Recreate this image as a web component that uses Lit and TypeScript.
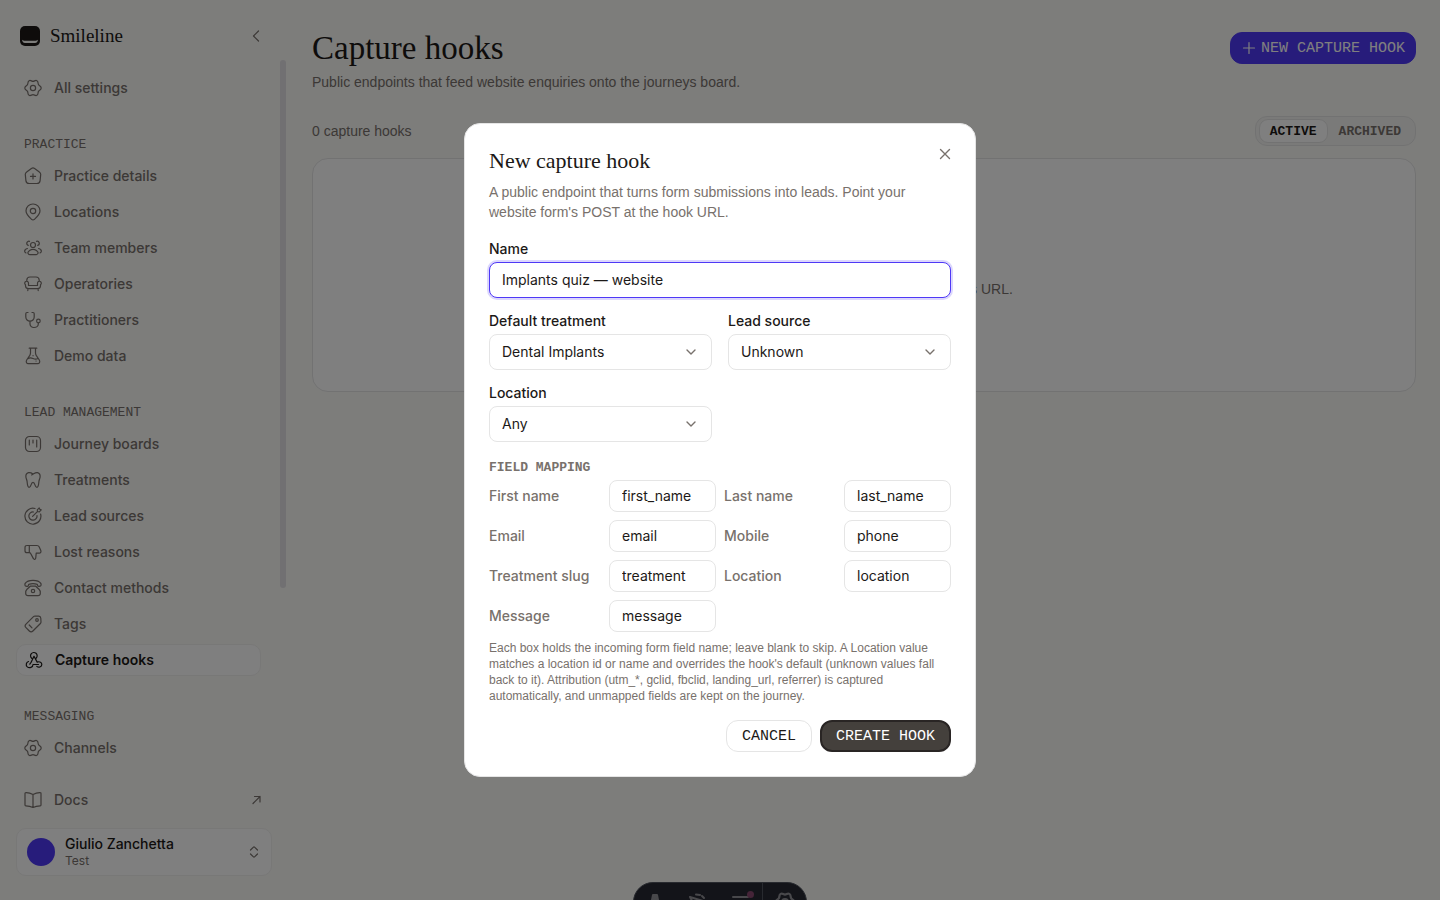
import { LitElement, html, svg, css } from "lit";
import { customElement, state } from "lit/decorators.js";

const paths: Record<string, unknown> = {
  gear: svg`<path d="M9 2.400C10.500 2.400 11.300.8 12.900 1.700 14.600 2.700 13.700 4.400 14.500 5.600 15.200 6.800 17.200 7 17.200 9 17.200 11 15.200 11.200 14.500 12.400 13.700 13.600 14.600 15.300 12.900 16.300 11.300 17.200 10.500 15.600 9 15.600 7.500 15.600 6.700 17.200 5.100 16.300 3.400 15.300 4.300 13.600 3.500 12.400 2.800 11.200.8 11 .8 9 .8 7 2.800 6.800 3.500 5.600 4.300 4.400 3.400 2.700 5.100 1.700 6.700.8 7.500 2.400 9 2.400Z"/><circle cx="9" cy="9" r="2.600"/>`,
  home: svg`<path d="M7.400 1.500a2.800 2.800 0 0 1 3.200 0l4.400 3.200c1 .7 1.800 1.600 1.700 2.800l-.6 6.100c-.2 2.100-1.400 2.900-3.200 2.900H5.100c-1.800 0-3-.8-3.200-2.900l-.6-6.100C1.200 6.300 2 5.400 3 4.700Z"/><path d="M9 6.900v5M6.500 9.400h5"/>`,
  pin: svg`<path d="M9 17c-.6 0-1-.3-1.500-.7C4.800 13.700 2 11.200 2 7.700A6.900 6.900 0 0 1 9 1a6.900 6.900 0 0 1 7 6.700c0 3.500-2.800 6-5.500 8.600-.5.4-.9.7-1.500.7Z"/><circle cx="9" cy="8" r="2.700"/>`,
  team: svg`<circle cx="9" cy="6" r="2.500"/><path d="M5.600 11.500c2-1.300 4.800-1.300 6.800 0 1 .7 2.200 1.800 1.500 3-.4.700-1 1.200-1.900 1.200H6c-.9 0-1.500-.5-1.900-1.200-.7-1.200.5-2.300 1.500-3ZM12.500 2.300a2.100 2.100 0 1 1 1.200 4.100M5.500 2.300a2.100 2.100 0 1 0-1.200 4.100M14.600 9.500c1.500.4 2.900 1.500 2.700 3-.1.700-.6 1.200-1.200 1.300M3.400 9.500C1.900 9.900.5 11 .7 12.500c.1.700.6 1.200 1.200 1.300"/>`,
  sofa: svg`<path d="M2.800 6.200V5a3.200 3.200 0 0 1 3.200-3h6a3.200 3.200 0 0 1 3.200 3v1.200M4.500 10.500V8.200A1.900 1.900 0 1 0 1.500 9.700V11a3 3 0 0 0 3 2.700h9a3 3 0 0 0 3-2.700V9.700a1.900 1.900 0 1 0-3-1.500v2.300ZM3.800 13.700v1.900M14.200 13.700v1.900"/>`,
  steth: svg`<path d="M4 1.500H3c-.8 0-1.200.5-1.200 1.300V6a4.200 4.200 0 0 0 8.400 0V2.800c0-.8-.4-1.300-1.200-1.300H8M6 10.200V13a3.700 3.700 0 0 0 4 3.500c2.300 0 4.300-1.300 4.300-3.500v-1.200"/><circle cx="14.400" cy="10" r="1.800"/>`,
  flask: svg`<path d="M5.200 1.200h7.600M6.500 1.200v4.600c0 1-.2 1.800-.7 2.600L2.700 13c-1 1.600-.2 3.600 1.700 3.600h9.200c1.900 0 2.700-2 1.700-3.600l-3.100-4.600c-.5-.8-.7-1.600-.7-2.600V1.200M4.200 11.500c1.600-1 3.200-.7 4.800 0 1.600.7 3.200.9 4.800 0M9 8.700h.1M12 14h.1"/>`,
  board: svg`<rect x="1.500" y="1.500" width="15" height="15" rx="4"/><path d="M5.300 5v5M9 5v3M12.700 5v7"/>`,
  tooth: svg`<path d="M9 3C7.500 2 6 1.400 4.500 1.700 2.500 2.200 1.700 4 1.900 6c.2 1.800 1 2.700 1.200 4.500.2 2 .3 5.800 2 5.800 2.400 0 1.500-5 3.900-5s1.500 5 3.900 5c1.700 0 1.800-3.800 2-5.800.2-1.800 1-2.700 1.200-4.500.2-2-.6-3.800-2.600-4.300C11.300 1.200 10 2.900 7.600 4"/>`,
  target: svg`<path d="M11 1.500A8 8 0 1 0 16.600 7M9.500 5A4.100 4.100 0 1 0 13 8.500M8.600 9.400l5-5M13.500 4.500l-.2-1.700L15.200.9l.6 1.400 1.400.6-1.900 1.900Z"/>`,
  down: svg`<path d="M5.300 2.500H3C1.700 2.500 1 3.200 1 4.500v3.200c0 1.300.7 2 2 2h2.300ZM5.300 2.500H13c1 0 1.700.4 2.100 1.300l1.700 3.700c.5 1.400-.2 2.700-1.600 2.700h-3l-.5 5c-.1 1.200-1.700 1.600-2.300.4L6.800 10.700c-.4-.7-.8-1-1.500-1"/>`,
  phone: svg`<path d="M4.800 5.300 4.400 6.500c-.3.700-.8.900-1.500.8l-1-.2C.9 6.900.6 5.500 1.200 4.400 2.700 2 5.500 1.300 9 1.300S15.300 2 16.800 4.400c.6 1.100.3 2.500-.7 2.700l-1 .2c-.7.100-1.200-.1-1.500-.8l-.4-1.200c-2.800-.8-5.600-.8-8.400 0ZM6.300 7.200h5.400l3.300 3.100c1.100 1 1.500 2.500 1.300 4.200-.1 1.500-.8 2.200-2.300 2.200H4c-1.500 0-2.200-.7-2.300-2.200-.2-1.700.2-3.200 1.300-4.200Z"/><circle cx="9" cy="12" r="1.700"/>`,
  tag: svg`<path d="M9.500 1.600 2 9.100c-1.300 1.300-1.300 2.300 0 3.600L5.300 16c1.300 1.300 2.300 1.300 3.600 0l7.500-7.500c.4-.4.600-.9.600-1.500l-.2-3.800c-.1-1.300-.7-1.900-2-2L11 1c-.6 0-1.100.2-1.500.6Z"/><circle cx="13" cy="5" r="1.300"/><path d="m5.200 10 2.800 2.800"/>`,
  hook: svg`<path d="M9 5.300 6 11.500M11.300 7A3.300 3.300 0 1 0 6.700 7.300M9 5.300l3.200 5.800c2.500-1 4.800.3 4.600 2.600-.2 2.300-3.200 3.300-5 1.700M13.500 13.500H8c0 3-3.700 4-5.700 2.400-1.800-1.600-1.200-4.800 1.200-5.400M4.800 13.200 6 11.500"/>`,
  book: svg`<path d="M9 3.500v13M9 3.500C6.600 2.200 4 1.600 1.800 1.700c-.5 0-.8.3-.8.800V14c0 .5.300.8.800.8 2.400 0 5 .5 7.200 1.700 2.200-1.200 4.800-1.700 7.200-1.700.5 0 .8-.3.800-.8V2.500c0-.5-.3-.8-.8-.8C14 1.600 11.400 2.200 9 3.500Z"/>`,
};

const icon = (name: string) => html`<svg class="icon" viewBox="0 0 18 18" aria-hidden="true">${paths[name]}</svg>`;

const sections = [
  { title: "", items: [["gear", "All settings"]] },
  {
    title: "Practice",
    items: [["home", "Practice details"], ["pin", "Locations"], ["team", "Team members"], ["sofa", "Operatories"], ["steth", "Practitioners"], ["flask", "Demo data"]],
  },
  {
    title: "Lead management",
    items: [["board", "Journey boards"], ["tooth", "Treatments"], ["target", "Lead sources"], ["down", "Lost reasons"], ["phone", "Contact methods"], ["tag", "Tags"], ["hook", "Capture hooks"]],
  },
  { title: "Messaging", items: [["gear", "Channels"]] },
];

const mapping = [
  ["First name", "first_name"],
  ["Last name", "last_name"],
  ["Email", "email"],
  ["Mobile", "phone"],
  ["Treatment slug", "treatment"],
  ["Location", "location"],
  ["Message", "message"],
];

@customElement("app-root")
export class AppRoot extends LitElement {
  @state() private current = "Capture hooks";

  static styles = css`
    :host {
      --sans: Inter, "Liberation Sans", sans-serif;
      --prose: "Liberation Sans", Arial, sans-serif;
      --serif: "Liberation Serif", serif;
      --mono: "Liberation Mono", monospace;
      --ink: #1c1917;
      --muted: #78716c;
      --line: #e5e5e5;
      --accent: #4f39f6;
      display: block;
      height: 100vh;
      overflow: hidden;
      background: #fafaf7;
      color: var(--ink);
      font: 400 14px/20px var(--sans);
    }
    * { box-sizing: border-box; }
    h1, h2, p { margin: 0; }
    p, .count { font-family: var(--prose); }
    h1, h2 { font-family: var(--serif); font-weight: 400; }
    button, input, select { font: inherit; color: inherit; margin: 0; }
    button { cursor: pointer; }
    svg { fill: none; stroke: currentColor; stroke-width: 1.2; stroke-linecap: round; stroke-linejoin: round; flex: none; }
    .icon { width: 18px; height: 18px; }
    .layout { display: grid; grid-template-columns: 288px 1fr; height: 100%; }

    .sidebar { display: flex; flex-direction: column; min-height: 0; padding: 12px 16px 24px; }
    .brand-row { display: flex; align-items: center; justify-content: space-between; height: 48px; padding: 0 8px 0 4px; flex: none; }
    .brand { display: flex; align-items: center; gap: 10px; font: 400 19px/24px var(--serif); }
    .logo { width: 20px; height: 20px; stroke: none; }
    .collapse { display: flex; padding: 0; border: 0; background: none; color: var(--muted); }
    .small { width: 16px; height: 16px; }
    .scroller { position: relative; flex: 1; min-height: 0; margin-right: -16px; padding: 12px 27px 0 0; overflow: hidden; display: flex; flex-direction: column; gap: 32px; }
    .thumb { position: absolute; top: 0; right: 2px; width: 6px; height: 75%; border-radius: 3px; background: #e2e1e4; }
    .section { display: flex; flex-direction: column; gap: 6px; }
    .caption { font: 400 13px/18px var(--mono); text-transform: uppercase; color: var(--muted); }
    .section .caption { padding-left: 8px; }
    .items { display: flex; flex-direction: column; gap: 4px; }
    .nav-link { display: flex; align-items: center; gap: 12px; height: 32px; padding: 0 8px; border-radius: 10px; color: var(--muted); font-weight: 500; text-decoration: none; }
    .nav-link.active { border: 1px solid #f1f0ee; background: #fff; color: var(--ink); font-weight: 600; }
    .bottom { display: flex; flex-direction: column; gap: 12px; padding-top: 20px; flex: none; }
    .docs span { flex: 1; }
    .user { display: flex; align-items: center; gap: 10px; height: 48px; padding: 0 9px 0 10px; border: 1px solid #f1f0ee; border-radius: 10px; background: #fff; text-align: left; }
    .user .small { color: var(--muted); }
    .avatar { width: 28px; height: 28px; border-radius: 50%; background: var(--accent); }
    .who { flex: 1; display: flex; flex-direction: column; font-weight: 500; line-height: 18px; }
    .who small { font-size: 12px; line-height: 16px; font-weight: 400; color: var(--muted); }

    .main { min-width: 0; padding: 32px 24px; }
    .head, .toolbar { display: flex; justify-content: space-between; align-items: flex-start; }
    .titles { display: flex; flex-direction: column; gap: 8px; color: var(--muted); }
    h1 { font-size: 33px; line-height: 32px; color: var(--ink); }
    .toolbar { margin: 24px 0 12px; align-items: center; color: var(--muted); }
    .btn { display: inline-flex; align-items: center; justify-content: center; height: 32px; padding: 2px 15px 0; border: 1px solid var(--line); border-radius: 12px; background: #fff; font: 400 15px/20px var(--mono); text-transform: uppercase; }
    .btn.primary { gap: 4px; border-color: var(--accent); background: var(--accent); color: #fff; padding: 2px 10px 0; }
    .btn.primary svg { margin-bottom: 2px; }
    .btn.dark { border: 2px solid #292524; background: #44403c; color: #fff; padding: 2px 14px 0; }
    .segmented { display: flex; padding: 2px 3px; border: 1px solid var(--line); border-radius: 12px; background: #f5f5f3; }
    .segment { height: 24px; padding: 2px 10px 0; border: 1px solid transparent; border-radius: 9px; background: none; color: var(--muted); font: 700 13px/16px var(--mono); text-transform: uppercase; }
    .segment.on { border-color: var(--line); background: #fff; color: var(--ink); }
    .empty { display: flex; flex-direction: column; align-items: center; justify-content: center; gap: 4px; min-height: 234px; padding: 32px; border: 1px solid var(--line); border-radius: 16px; background: #fff; color: var(--muted); text-align: center; }
    .empty h2 { font-size: 20px; line-height: 24px; color: var(--ink); }

    .devbar { position: fixed; left: 50%; bottom: -22px; transform: translateX(-50%); display: flex; width: 174px; height: 40px; border: 1px solid #50545e; border-radius: 20px; background: #262832; color: #909096; overflow: hidden; }
    .tool { position: relative; flex: 1; display: flex; justify-content: center; padding: 9px 0 0; border: 0; background: none; }
    .tool + .tool:last-child { border-left: 1px solid #50545e; }
    .tool svg { width: 20px; height: 20px; stroke-width: 2; }
    .dot { position: absolute; top: 8px; right: 8px; width: 7px; height: 7px; border-radius: 50%; background: #8a4870; }

    .overlay { position: fixed; inset: 0; display: grid; place-items: center; background: rgba(0, 0, 0, 0.5); }
    .dialog { position: relative; width: min(512px, calc(100vw - 32px)); padding: 24px; border: 1px solid var(--line); border-radius: 16px; background: #fff; }
    .dialog h2 { font-size: 22px; line-height: 26px; margin-bottom: 8px; }
    .lead { color: var(--muted); margin-bottom: 20px; }
    .close { position: absolute; top: 22px; right: 22px; display: flex; padding: 0; border: 0; background: none; color: var(--muted); }
    .form { display: flex; flex-direction: column; gap: 16px; }
    .pair { display: grid; grid-template-columns: 1fr 1fr; gap: 16px; }
    .field { display: flex; flex-direction: column; gap: 6px; }
    .field label { font-weight: 500; line-height: 14px; }
    .control { width: 100%; height: 36px; padding: 0 12px; border: 1px solid var(--line); border-radius: 8px; background: #fff; outline: none; appearance: none; }
    input.control { padding-bottom: 2px; }
    .control.focused { border-color: var(--accent); box-shadow: 0 0 0 2px #dcd7fd; }
    .control.compact { height: 32px; }
    .picker { position: relative; }
    .picker svg { position: absolute; right: 13px; top: 10px; color: var(--muted); pointer-events: none; }
    .bold { stroke-width: 1.4; }
    .mapping .caption { font-weight: 700; line-height: 20px; margin-bottom: 2px; }
    .map-grid { display: grid; grid-template-columns: 1fr 1fr; gap: 8px; margin-bottom: 8px; }
    .map-row { display: grid; grid-template-columns: 112px 1fr; align-items: center; gap: 8px; }
    .map-row label { color: var(--muted); font-weight: 500; }
    .hint { font-size: 12px; line-height: 16px; color: var(--muted); }
    .actions { display: flex; justify-content: flex-end; gap: 8px; }
  `;

  private link(name: string, text: string) {
    const active = text === this.current;
    return html`<a class="nav-link ${active ? "active" : ""}" href="#${name}" @click=${() => (this.current = text)}>${icon(name)}<span>${text}</span></a>`;
  }

  private picker(id: string, label: string, value: string) {
    return html`<div class="field">
      <label for=${id}>${label}</label>
      <div class="picker">
        <select class="control" id=${id}><option>${value}</option></select>
        <svg class="small bold" viewBox="0 0 16 16" aria-hidden="true"><path d="m4 6 4 4 4-4"/></svg>
      </div>
    </div>`;
  }

  render() {
    return html`
      <div class="layout">
        <aside class="sidebar">
          <div class="brand-row">
            <div class="brand">
              <svg class="logo" viewBox="0 0 20 20" aria-hidden="true"><rect width="20" height="20" rx="5" fill="#1c1917"/><path d="M2 13.800c.3 2 1 3.200 3 3.200h10c2 0 2.700-1.200 3-3.200-1 .9-1.800 1-3 1H5c-1.200 0-2-.1-3-1Z" fill="#fafaf7"/></svg>
              Smileline
            </div>
            <button class="collapse" aria-label="Collapse sidebar"><svg class="small" viewBox="0 0 16 16"><path d="m10.500 3-5 5 5 5"/></svg></button>
          </div>
          <nav class="scroller">
            ${sections.map(
              (s) => html`<div class="section">
                ${s.title ? html`<div class="caption">${s.title}</div>` : ""}
                <div class="items">${s.items.map(([n, t]) => this.link(n, t))}</div>
              </div>`
            )}
            <div class="thumb"></div>
          </nav>
          <div class="bottom">
            <a class="nav-link docs" href="#docs">${icon("book")}<span>Docs</span><svg class="small" viewBox="0 0 16 16" aria-hidden="true"><path d="m5 11.500 7-7M6.500 4.500H12v5.500"/></svg></a>
            <button class="user">
              <span class="avatar"></span>
              <span class="who">Giulio Zanchetta<small>Test</small></span>
              <svg class="small" viewBox="0 0 16 16" aria-hidden="true"><path d="m4.500 6 2.700-2.700c.5-.5 1.100-.5 1.600 0L11.500 6M4.500 10l2.700 2.700c.5.5 1.100.5 1.600 0L11.500 10"/></svg>
            </button>
          </div>
        </aside>
        <main class="main">
          <header class="head">
            <div class="titles">
              <h1>Capture hooks</h1>
              <p>Public endpoints that feed website enquiries onto the journeys board.</p>
            </div>
            <button class="btn primary"><svg class="small" viewBox="0 0 16 16" aria-hidden="true"><path d="M8 2.500v11M2.500 8h11"/></svg>New capture hook</button>
          </header>
          <div class="toolbar">
            <span class="count">0 capture hooks</span>
            <div class="segmented">
              <button class="segment on" aria-pressed="true">Active</button>
              <button class="segment" aria-pressed="false">Archived</button>
            </div>
          </div>
          <section class="empty">
            <h2>No capture hooks</h2>
            <p>Add a hook, then send forms to the hook's URL.</p>
          </section>
        </main>
      </div>
      <div class="devbar">
        <button class="tool" aria-label="Menu"><svg viewBox="0 0 20 20"><path d="M5.500 15.500 8 3h4l2.500 12.500-4.500-2Z" fill="currentColor"/></svg></button>
        <button class="tool" aria-label="Inspect"><svg viewBox="0 0 20 20"><path d="m2 5 13 4-5 2-2 5ZM8 2.500l4 .5M14 4l2 2"/></svg></button>
        <button class="tool" aria-label="Audit"><svg viewBox="0 0 20 20"><path d="M2 5h15M2 10h12"/></svg><span class="dot"></span></button>
        <button class="tool" aria-label="Settings"><svg viewBox="0 0 18 18">${paths.gear}</svg></button>
      </div>
      <div class="overlay">
        <div class="dialog" role="dialog" aria-modal="true" aria-labelledby="dialog-title">
          <h2 id="dialog-title">New capture hook</h2>
          <p class="lead">A public endpoint that turns form submissions into leads. Point your website form's POST at the hook URL.</p>
          <button class="close" aria-label="Close"><svg class="small bold" viewBox="0 0 16 16"><path d="m3.500 3.500 9 9M12.500 3.500l-9 9"/></svg></button>
          <form class="form" @submit=${(e: Event) => e.preventDefault()}>
            <div class="field">
              <label for="name">Name</label>
              <input class="control focused" id="name" .value=${"Implants quiz — website"} />
            </div>
            <div class="pair">
              ${this.picker("treatment", "Default treatment", "Dental Implants")}
              ${this.picker("source", "Lead source", "Unknown")}
              ${this.picker("location", "Location", "Any")}
            </div>
            <div class="mapping">
              <div class="caption">Field mapping</div>
              <div class="map-grid">
                ${mapping.map(
                  ([label, value], i) => html`<div class="map-row">
                    <label for="map-${i}">${label}</label>
                    <input class="control compact" id="map-${i}" .value=${value} />
                  </div>`
                )}
              </div>
              <p class="hint">Each box holds the incoming form field name; leave blank to skip. A Location value matches a location id or name and overrides the hook's default (unknown values fall back to it). Attribution (utm_*, gclid, fbclid, landing_url, referrer) is captured automatically, and unmapped fields are kept on the journey.</p>
            </div>
            <div class="actions">
              <button class="btn" type="button">Cancel</button>
              <button class="btn dark" type="submit">Create hook</button>
            </div>
          </form>
        </div>
      </div>
    `;
  }
}
